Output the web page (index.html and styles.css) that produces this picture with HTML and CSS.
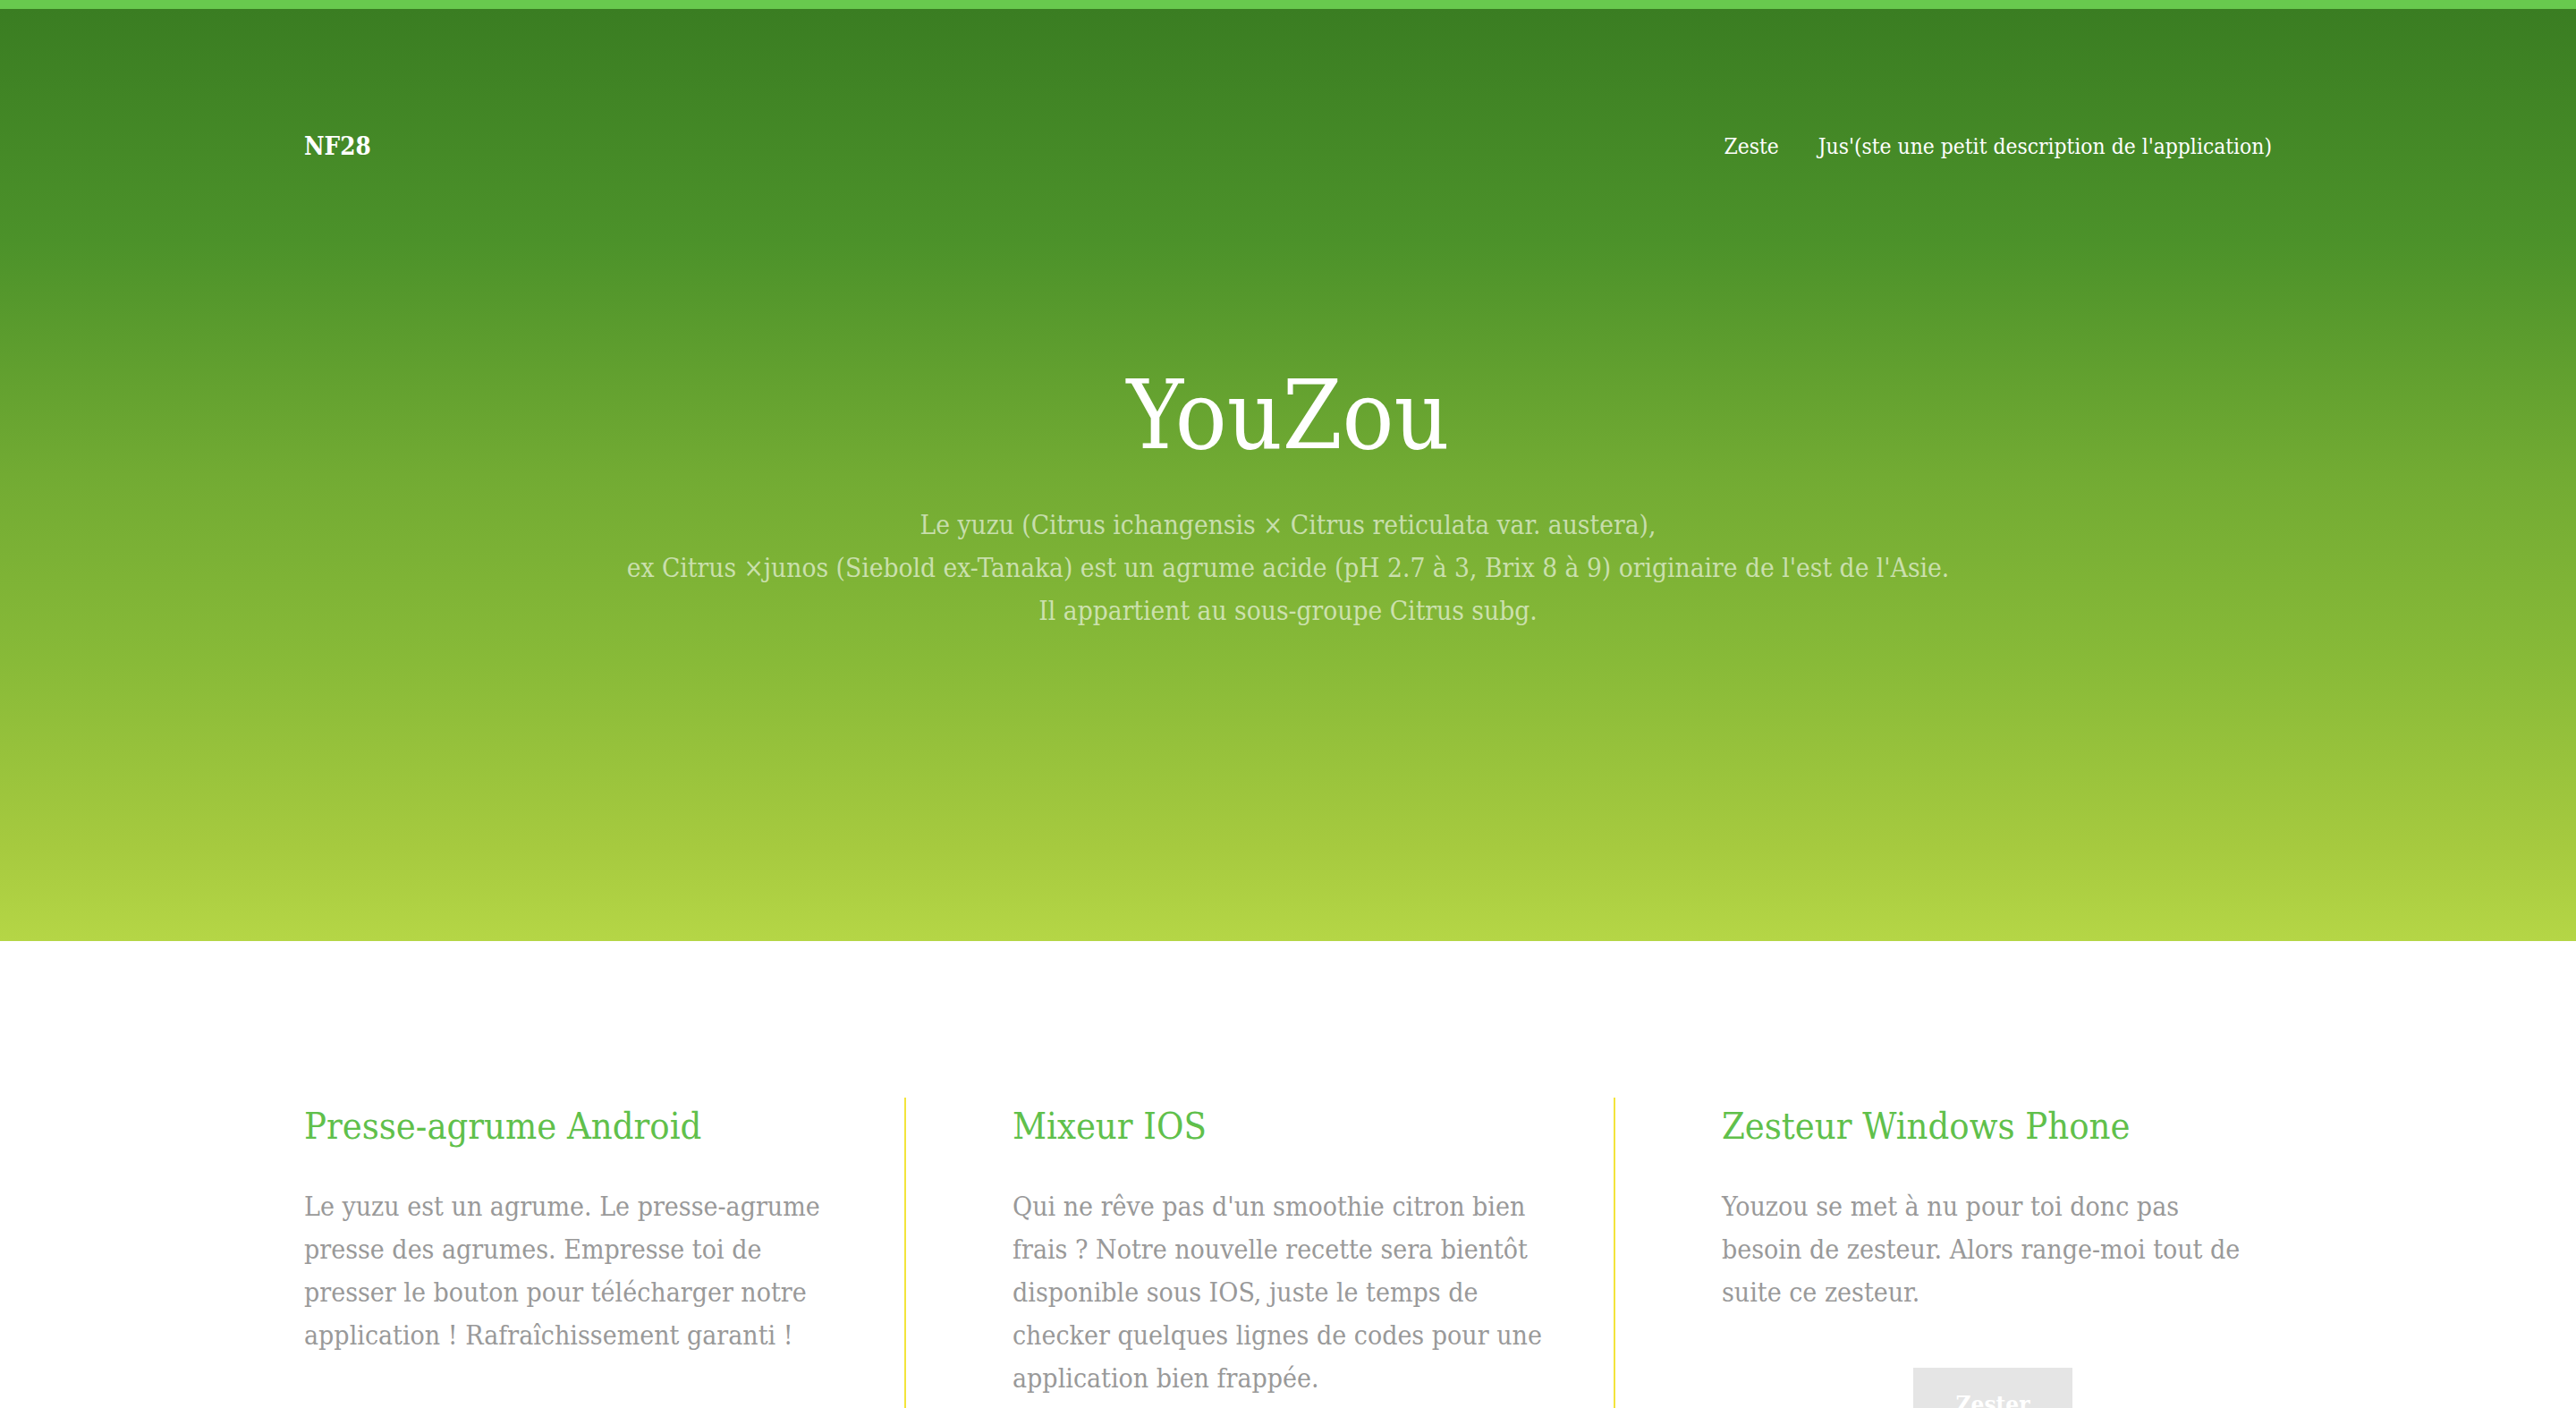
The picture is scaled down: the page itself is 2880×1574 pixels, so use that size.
FILE: index.html
```html
<!DOCTYPE html>
<html lang="fr">
<head>
<meta charset="utf-8">
<title>YouZou</title>
<link rel="stylesheet" href="styles.css">
</head>
<body>
<div class="topbar"></div>
<header class="hero">
  <div class="container">
    <nav class="nav">
      <a class="brand" href="#">NF28</a>
      <ul class="menu">
        <li><a href="#">Zeste</a></li>
        <li><a href="#">Jus'(ste une petit description de l'application)</a></li>
      </ul>
    </nav>
    <h1 class="hero-title">YouZou</h1>
    <p class="hero-sub">Le yuzu (Citrus ichangensis × Citrus reticulata var. austera),<br>ex Citrus ×junos (Siebold ex-Tanaka) est un agrume acide (pH 2.7 à 3, Brix 8 à 9) originaire de l'est de l'Asie.<br>Il appartient au sous-groupe Citrus subg.</p>
  </div>
</header>
<main class="features container">
  <section class="feature">
    <h2>Presse-agrume Android</h2>
    <p>Le yuzu est un agrume. Le presse-agrume presse des agrumes. Empresse toi de presser le bouton pour télécharger notre application ! Rafraîchissement garanti !</p>
  </section>
  <section class="feature">
    <h2>Mixeur IOS</h2>
    <p>Qui ne rêve pas d'un smoothie citron bien frais ? Notre nouvelle recette sera bientôt disponible sous IOS, juste le temps de checker quelques lignes de codes pour une application bien frappée.</p>
  </section>
  <section class="feature">
    <h2>Zesteur Windows Phone</h2>
    <p>Youzou se met à nu pour toi donc pas besoin de zesteur. Alors range-moi tout de suite ce zesteur.</p>
    <div class="actions"><a class="btn" href="#">Zester</a></div>
  </section>
</main>
</body>
</html>
```
FILE: styles.css
```css
html, body { margin: 0; padding: 0; }
body {
  font-family: "Roboto Slab", "DejaVu Serif Condensed", "DejaVu Serif", serif;
  background: #fff;
  color: #999;
}
a { text-decoration: none; color: inherit; }
.container { width: 2200px; margin: 0 auto; }
.topbar { height: 10px; background: #68c94e; }
.hero {
  padding: 123px 0 345px;
  background: linear-gradient(to bottom, #3a7d22 0%, #4c922a 25%, #72ab33 50%, #88ba38 70%, #a6ca3f 90%, #b5d646 100%);
  color: #fff;
  text-align: center;
}
.nav { display: flex; justify-content: space-between; align-items: center; height: 60px; }
.brand { font-size: 27.5px; font-weight: 700; color: #fff; }
.menu { list-style: none; margin: 0; padding: 0; display: flex; gap: 44px; }
.menu a { font-size: 24.4px; color: #fff; }
.hero-title { margin: 208px 0 0; font-size: 107px; line-height: 127px; font-weight: 400; }
.hero-sub { margin: 35px 0 0; font-size: 29.6px; line-height: 48px; color: rgba(255,255,255,0.6); }
.features { display: grid; grid-template-columns: 673px 793px 734px; padding-top: 175px; }
.feature { box-sizing: border-box; padding: 0 66px 0 119px; border-right: 2px solid #f3e43c; }
.feature:first-child { padding-left: 0; }
.feature:last-child { border-right: none; padding-right: 9px; }
.feature h2 { margin: 8px 0 42px; font-size: 41.3px; line-height: 48px; font-weight: 400; color: #60c04b; }
.feature p { margin: 0; font-size: 30px; line-height: 48px; color: #999; }
.actions { text-align: center; margin-top: 60px; }
.btn { display: inline-block; padding: 20px 47px; background: #e5e5e5; color: #fff; font-size: 26px; line-height: 42px; font-weight: 700; }
```
